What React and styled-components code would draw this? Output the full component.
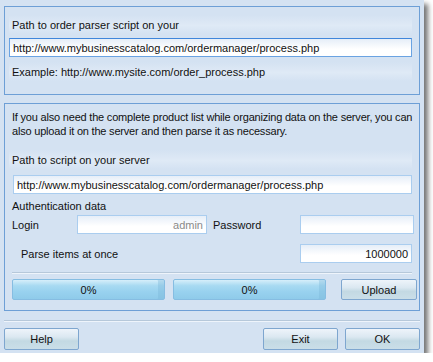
import React from "react";
import styled, { createGlobalStyle } from "styled-components";

const Global = createGlobalStyle`
  html, body { margin: 0; padding: 0; background: #ffffff; }
  body { font-family: "Liberation Sans", Arial, sans-serif; font-size: 11px; color: #111; }
  * { box-sizing: border-box; }
`;

const Window = styled.div`
  width: 424px;
  height: 353px;
  background: #d4e2f2;
  box-shadow: 4px 4px 5px rgba(0, 0, 0, 0.55);
  padding: 6px 4px 0 4px;
  display: flex;
  flex-direction: column;
`;

const Group = styled.div`
  border: 1px solid #6d9fd6;
  height: ${(p) => p.$h}px;
  margin-top: ${(p) => p.$mt || 0}px;
  padding: 0 7px 0 4px;
  display: flex;
  flex-direction: column;
`;

const Band = styled.div`
  height: 19px;
  margin-top: ${(p) => p.$mt || 0}px;
  padding-left: ${(p) => p.$pl || 3}px;
  display: flex;
  align-items: center;
  background: linear-gradient(to bottom, #d4e2f2 0%, #dde8f5 45%, #dfeaf6 55%, #d4e2f2 100%);
  white-space: nowrap;
`;

const TextLine = styled.div`
  line-height: 14px;
  margin-top: ${(p) => p.$mt || 0}px;
  padding-left: ${(p) => p.$pl || 0}px;
  letter-spacing: ${(p) => p.$ls || 0}px;
  white-space: nowrap;
`;

const Field = styled.div`
  height: 19px;
  width: ${(p) => (p.$w ? `${p.$w}px` : "auto")};
  margin-top: ${(p) => p.$mt || 0}px;
  margin-left: ${(p) => p.$ml || 0}px;
  border: 1px solid ${(p) => (p.$focused ? "#6aa3e2" : "#aacdef")};
  border-top-color: ${(p) => (p.$focused ? "#3f86db" : "#aacdef")};
  background: linear-gradient(to bottom, #e6eef8 0%, #ffffff 60%, #ffffff 100%);
  display: flex;
  align-items: center;
  justify-content: ${(p) => (p.$right ? "flex-end" : "flex-start")};
  padding: 0 ${(p) => (p.$right ? 3 : 0)}px 0 ${(p) => (p.$pl ?? 3)}px;
  color: ${(p) => (p.$muted ? "#8a8a8a" : "#111")};
  white-space: nowrap;
  overflow: hidden;
  flex-shrink: 0;
`;

const Row = styled.div`
  display: flex;
  align-items: center;
  height: ${(p) => p.$h || 19}px;
  margin-top: ${(p) => p.$mt || 0}px;
  padding-left: ${(p) => p.$pl || 0}px;
`;

const Label = styled.div`
  width: ${(p) => (p.$w ? `${p.$w}px` : "auto")};
  flex: ${(p) => (p.$w ? "0 0 auto" : "1 1 auto")};
  margin-left: ${(p) => p.$ml || 0}px;
  white-space: nowrap;
`;

const Separator = styled.div`
  height: 2px;
  margin-top: ${(p) => p.$mt || 0}px;
  margin-left: ${(p) => p.$ml || 0}px;
  width: ${(p) => (p.$w ? `${p.$w}px` : "auto")};
  border-top: 1px solid #b6c8da;
  border-bottom: 1px solid #eef4fb;
`;

const Progress = styled.div`
  width: 153px;
  height: 21px;
  flex-shrink: 0;
  margin-left: ${(p) => p.$ml || 0}px;
  border: 1px solid #86bde2;
  border-radius: 2px;
  background: linear-gradient(to bottom, #d6eefa 0%, #a8daf2 30%, #99d2ef 60%, #8fcbea 100%);
  display: flex;
  align-items: center;
  justify-content: center;
  box-shadow: inset -6px 0 0 rgba(120, 180, 215, 0.35);
`;

const Button = styled.button`
  width: ${(p) => p.$w || 75}px;
  height: ${(p) => p.$h || 22}px;
  margin-left: ${(p) => p.$ml || 0}px;
  border: 1px solid #7ea6cf;
  border-radius: 2px;
  background: linear-gradient(to bottom, #eef4fa 0%, #dbe8f1 40%, #c3d9e3 60%, #cadee8 100%);
  font-family: "Liberation Sans", Arial, sans-serif;
  font-size: 11px;
  color: #111;
  padding: 0;
  display: flex;
  align-items: center;
  justify-content: center;
  flex-shrink: 0;
`;

const Footer = styled.div`
  display: flex;
  align-items: center;
  margin-top: 6px;
`;

const Spacer = styled.div`
  flex: 1;
`;

const URL = "http://www.mybusinesscatalog.com/ordermanager/process.php";

export default function App() {
  return (
    <>
      <Global />
      <Window>
        <Group $h={89}>
          <Band $mt={8}>Path to order parser script on your</Band>
          <Field $mt={4} $focused>{URL}</Field>
          <Band $mt={5}>Example: http://www.mysite.com/order_process.php</Band>
        </Group>

        <Group $h={208} $mt={8}>
          <TextLine $mt={6} $pl={3} $ls={-0.2}>
            If you also need the complete product list while organizing data on the server, you can
            <br />
            also upload it on the server and then parse it as necessary.
          </TextLine>
          <Band $mt={12}>Path to script on your server</Band>
          <Field $mt={6} $ml={4} $pl={3}>{URL}</Field>
          <TextLine $mt={5} $pl={3}>Authentication data</TextLine>
          <Row $mt={2} $pl={3}>
            <Label $w={65}>Login</Label>
            <Field $w={130} $right $muted>admin</Field>
            <Label $w={87} $ml={6}>Password</Label>
            <Field $w={114} />
          </Row>
          <Row $mt={10} $pl={12}>
            <Label>Parse items at once</Label>
            <Field $w={112} $right>1000000</Field>
          </Row>
          <Separator $mt={9} $ml={3} />
          <Row $mt={5} $h={21} $pl={3}>
            <Progress>0%</Progress>
            <Progress $ml={8}>0%</Progress>
            <Button $w={76} $h={21} $ml={15}>Upload</Button>
          </Row>
        </Group>

        <Separator $mt={9} />
        <Footer>
          <Button>Help</Button>
          <Spacer />
          <Button>Exit</Button>
          <Button $ml={7}>OK</Button>
        </Footer>
      </Window>
    </>
  );
}
